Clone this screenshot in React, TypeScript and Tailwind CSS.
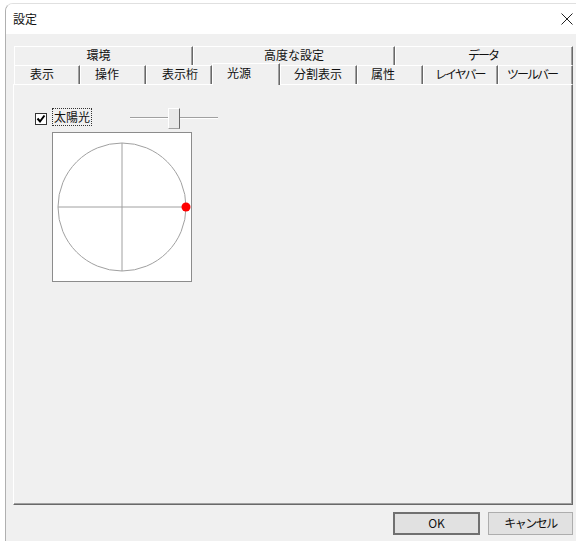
import React from "react"

const upperTabs = [
  { label: "環境", w: "w-[179px] pr-[10px]", narrow: false },
  { label: "高度な設定", w: "w-[202px]", narrow: false },
  { label: "データ", w: "w-[178px] pr-[2px]", narrow: true },
]

const lowerTabs = [
  { label: "表示", w: "w-[66px] pl-[15px]" },
  { label: "操作", w: "w-[66px] pl-[14px]" },
  { label: "表示桁", w: "w-[66px] pl-[15px]" },
  { label: "光源", w: "w-[68px] pl-[14px]", active: true },
  { label: "分割表示", w: "w-[77px] pl-[13px]" },
  { label: "属性", w: "w-[66px] pl-[13px]" },
  { label: "レイヤバー", w: "w-[75px] pl-[11px]", narrow: true },
  { label: "ツールバー", w: "w-[75px] pl-[8px]", narrow: true },
]

const tabEdge =
  "border-t border-l border-t-white border-l-white border-r border-r-[#696969] shadow-[inset_-1px_0_0_#a0a0a0] leading-none"

function SunDial() {
  return (
    <div className="ml-[17px] mt-[3px] w-[140px] h-[150px] bg-white border border-[#8c8c8c]">
      <svg width="138" height="148" viewBox="0 0 138 148">
        <circle cx="69" cy="74" r="64" fill="none" stroke="#a0a0a0" strokeWidth="1" />
        <line x1="69" y1="10" x2="69" y2="138" stroke="#a0a0a0" strokeWidth="1" />
        <line x1="5" y1="74" x2="133" y2="74" stroke="#a0a0a0" strokeWidth="1" />
        <circle cx="133" cy="74" r="4.5" fill="#ff0000" />
      </svg>
    </div>
  )
}

export default function App() {
  return (
    <div
      className="w-[576px] h-[541px] bg-white overflow-hidden text-[12px] text-[#111]"
      style={{ fontFamily: '"Noto Sans CJK JP", "Noto Sans", sans-serif' }}
    >
      <div className="ml-[5px] mt-[3px] h-[538px] flex flex-col border-l border-t border-l-[#b0b0b0] border-t-[#e0e0e0] rounded-tl-[8px] overflow-hidden">
        {/* title bar */}
        <div className="h-[30px] bg-white flex items-center justify-between pl-[7px] pr-[3px]">
          <span className="leading-none pb-[1px]">設定</span>
          <svg width="12" height="12" viewBox="0 0 12 12">
            <path d="M0.5 0.5 L11.5 11.5 M11.5 0.5 L0.5 11.5" stroke="#222" strokeWidth="1" />
          </svg>
        </div>

        {/* body */}
        <div className="flex-1 bg-[#f0f0f0] pl-[7px] pr-[3px] pt-[12px] flex flex-col">
          {/* upper tab row */}
          <div className="flex ml-px h-[19px]">
            {upperTabs.map((t) => (
              <div
                key={t.label}
                className={`${t.w} h-[19px] flex items-center justify-center pb-[2px] ${tabEdge} ${t.narrow ? "tracking-[-2px]" : ""}`}
              >
                {t.label}
              </div>
            ))}
          </div>

          {/* lower tab row */}
          <div className="flex ml-px h-[19px] items-end">
            {lowerTabs.map((t) =>
              t.active ? (
                <div
                  key={t.label}
                  className={`${t.w} h-[22px] mb-[-1px] relative z-10 bg-[#f0f0f0] flex items-start justify-start pt-[3px] ${tabEdge}`}
                >
                  {t.label}
                </div>
              ) : (
                <div
                  key={t.label}
                  className={`${t.w} h-[19px] flex items-center justify-start pb-[2px] ${tabEdge} ${t.narrow ? "tracking-[-2px]" : ""}`}
                >
                  {t.label}
                </div>
              )
            )}
          </div>

          {/* panel */}
          <div className="h-[421px] border-t border-l border-t-white border-l-white border-r border-b border-r-[#696969] border-b-[#696969] shadow-[inset_-1px_-1px_0_#a0a0a0] pl-[21px] pt-[23px] flex flex-col">
            <div className="flex items-start h-[21px]">
              <div className="mt-[5px] w-[12px] h-[12px] bg-white border border-[#333] flex items-center justify-center">
                <svg width="10" height="10" viewBox="0 0 10 10">
                  <path d="M1.5 4.5 L4 7.5 L8.5 1.5" fill="none" stroke="#000" strokeWidth="2" />
                </svg>
              </div>
              <div className="ml-[5px] h-[18px] px-[1px] flex items-center pb-[1px] border border-dotted border-[#333] leading-none">
                太陽光
              </div>
              <div className="ml-[38px] relative w-[88px] h-[21px]">
                <div className="absolute left-0 right-0 top-[9px] h-[2px] bg-[#a0a0a0] border-b border-white" />
                <div className="absolute left-[38px] top-0 w-[12px] h-[21px] bg-[#e8e8e8] border-l border-t border-l-white border-t-white border-r border-b border-r-[#696969] border-b-[#a0a0a0]" />
              </div>
            </div>
            <SunDial />
          </div>

          {/* buttons */}
          <div className="flex justify-end gap-[8px] mt-[7px]">
            <button className="w-[87px] h-[23px] bg-[#e1e1e1] border-2 border-[#707070] leading-none pb-[1px]">
              OK
            </button>
            <button className="w-[85px] h-[23px] bg-[#e1e1e1] border border-[#adadad] leading-none pb-[1px] tracking-[-1.5px]">
              キャンセル
            </button>
          </div>
        </div>
      </div>
    </div>
  )
}
